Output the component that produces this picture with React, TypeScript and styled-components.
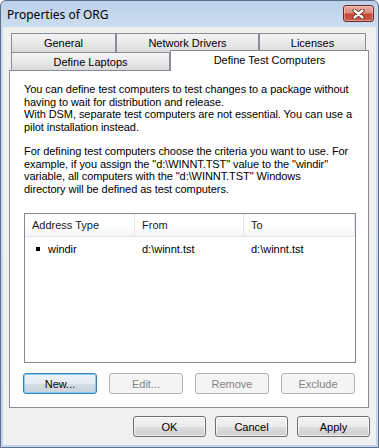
import React from 'react'
import styled, { createGlobalStyle, css } from 'styled-components'

const GlobalStyle = createGlobalStyle`
  html, body {
    margin: 0;
    padding: 0;
    background: #ffffff;
  }
  body {
    font-family: "Liberation Sans", Arial, sans-serif;
    font-size: 11px;
    color: #000000;
  }
`

const Window = styled.div`
  width: 379px;
  height: 448px;
  box-sizing: border-box;
  border: 1px solid #5d6f86;
  border-radius: 6px 6px 0 0;
  background: linear-gradient(#bcd1ea, #cbdcf0 24px, #c4d7ee);
  padding: 0 2px 2px;
  display: flex;
  flex-direction: column;
`

const TitleBar = styled.div`
  height: 26px;
  display: flex;
  align-items: center;
  padding-left: 4px;
`

const Title = styled.span`
  font-family: "Noto Sans", "Open Sans", sans-serif;
  font-size: 12px;
  color: #000000;
`

const CloseButton = styled.div`
  margin-left: auto;
  margin-right: 2px;
  align-self: flex-start;
  margin-top: 4px;
  width: 31px;
  height: 17px;
  box-sizing: border-box;
  border: 1px solid #6b2b2b;
  border-radius: 3px;
  background: linear-gradient(#e9ada0 0%, #dc8c7c 45%, #c34634 55%, #cc5e49 100%);
  box-shadow: inset 0 0 0 1px rgba(255, 220, 210, 0.45);
  display: flex;
  align-items: center;
  justify-content: center;
`

const Client = styled.div`
  flex: 1;
  background: #f0f0f0;
  padding: 6px 7px 0 6px;
  display: flex;
  flex-direction: column;
`

const TabStrip = styled.div`
  display: flex;
  flex-direction: column;
  height: 37px;
  padding-left: 2px;
  position: relative;
  z-index: 1;
`

const TabRow = styled.div<{ $h: number }>`
  display: flex;
  height: ${p => p.$h}px;
  align-items: flex-end;
`

const Tab = styled.div<{ $w: number; $active?: boolean }>`
  width: ${p => p.$w}px;
  height: 100%;
  box-sizing: border-box;
  border: 1px solid #898c95;
  border-bottom: none;
  background: linear-gradient(#f5f5f5, #e6e6e6 60%, #dadada);
  display: flex;
  align-items: center;
  justify-content: center;
  white-space: nowrap;
  ${p => p.$active && css`
    background: #ffffff;
    height: 21px;
    margin-bottom: -1px;
    padding-bottom: 2px;
  `}
`

const Panel = styled.div`
  width: 360px;
  height: 338px;
  box-sizing: border-box;
  border: 1px solid #898c95;
  background: #ffffff;
  padding: 12px 12px 0 14px;
`

const Para = styled.p`
  margin: 0;
  line-height: 12.5px;
  white-space: nowrap;
  letter-spacing: -0.07px;

  & + & {
    margin-top: 12px;
  }
`

const ListBox = styled.div`
  margin-top: 18px;
  width: 332px;
  height: 150px;
  box-sizing: border-box;
  border: 1px solid #828790;
  background: #ffffff;
`

const ListHeader = styled.div`
  display: flex;
  height: 23px;
  box-sizing: border-box;
  background: linear-gradient(#ffffff, #ffffff 50%, #f4f5f7);
  border-bottom: 1px solid #e2e4e8;
`

const HeaderCell = styled.div<{ $w?: number }>`
  ${p => (p.$w ? `width: ${p.$w}px;` : 'flex: 1;')}
  box-sizing: border-box;
  padding-left: 7px;
  display: flex;
  align-items: center;
  color: #1a1a1a;
  border-right: 1px solid #e3e6ea;
`

const ListRow = styled.div`
  display: flex;
  height: 17px;
  margin-top: 3px;
  align-items: center;
`

const Cell = styled.div<{ $w?: number }>`
  ${p => (p.$w ? `width: ${p.$w}px;` : 'flex: 1;')}
  box-sizing: border-box;
  padding-left: 7px;
  display: flex;
  align-items: center;
`

const Bullet = styled.span`
  width: 4px;
  height: 4px;
  background: #000000;
  margin-left: 4px;
  margin-right: 8px;
`

const ButtonRow = styled.div<{ $gap: number }>`
  display: flex;
  gap: ${p => p.$gap}px;
`

const PanelButtons = styled(ButtonRow)`
  margin-top: 10px;
  margin-left: -1px;
`

const Footer = styled(ButtonRow)`
  margin-top: 8px;
  justify-content: flex-end;
  margin-right: -1px;
`

const Button = styled.button<{ $default?: boolean }>`
  width: 74px;
  height: 21px;
  box-sizing: border-box;
  padding: 0;
  font-family: "Liberation Sans", Arial, sans-serif;
  font-size: 11px;
  color: #000000;
  border: 1px solid #707070;
  border-radius: 3px;
  background: linear-gradient(#f2f2f2 0%, #ebebeb 50%, #dddddd 51%, #cfcfcf 100%);
  box-shadow: inset 0 0 0 1px rgba(255, 255, 255, 0.7);

  ${p => p.$default && css`
    border-color: #3c7fb1;
    box-shadow: inset 0 0 0 1px #7fd0f5;
    background: linear-gradient(#eef3f7 0%, #e4ecf2 50%, #d4dde5 51%, #c8d3dc 100%);
  `}

  &:disabled {
    color: #838383;
    border-color: #adb2b5;
    background: #f4f4f4;
    box-shadow: none;
  }
`

const FooterButton = styled(Button)`
  width: 73px;
`

const CloseGlyph = () => (
  <svg width="13" height="10" viewBox="0 0 13 10">
    <path d="M2.5 1.5 L10.5 8.5 M10.5 1.5 L2.5 8.5" stroke="#5a1e1a" strokeWidth="4" strokeLinecap="round" />
    <path d="M2.5 1.5 L10.5 8.5 M10.5 1.5 L2.5 8.5" stroke="#ffffff" strokeWidth="2.4" strokeLinecap="round" />
  </svg>
)

export default function App() {
  return (
    <>
      <GlobalStyle />
      <Window>
        <TitleBar>
          <Title>Properties of ORG</Title>
          <CloseButton>
            <CloseGlyph />
          </CloseButton>
        </TitleBar>
        <Client>
          <TabStrip>
            <TabRow $h={19}>
              <Tab $w={105}>General</Tab>
              <Tab $w={143}>Network Drivers</Tab>
              <Tab $w={107}>Licenses</Tab>
            </TabRow>
            <TabRow $h={18}>
              <Tab $w={159}>Define Laptops</Tab>
              <Tab $w={199} $active>Define Test Computers</Tab>
            </TabRow>
          </TabStrip>
          <Panel>
            <Para>
              You can define test computers to test changes to a package without<br />
              having to wait for distribution and release.<br />
              With DSM, separate test computers are not essential. You can use a<br />
              pilot installation instead.
            </Para>
            <Para>
              For defining test computers choose the criteria you want to use. For<br />
              example, if you assign the "d:\WINNT.TST" value to the "windir"<br />
              variable, all computers with the "d:\WINNT.TST" Windows<br />
              directory will be defined as test computers.
            </Para>
            <ListBox>
              <ListHeader>
                <HeaderCell $w={110}>Address Type</HeaderCell>
                <HeaderCell $w={109}>From</HeaderCell>
                <HeaderCell>To</HeaderCell>
              </ListHeader>
              <ListRow>
                <Cell $w={110}>
                  <Bullet />
                  windir
                </Cell>
                <Cell $w={109}>d:\winnt.tst</Cell>
                <Cell>d:\winnt.tst</Cell>
              </ListRow>
            </ListBox>
            <PanelButtons $gap={12}>
              <Button $default>New...</Button>
              <Button disabled>Edit...</Button>
              <Button disabled>Remove</Button>
              <Button disabled>Exclude</Button>
            </PanelButtons>
          </Panel>
          <Footer $gap={9}>
            <FooterButton>OK</FooterButton>
            <FooterButton>Cancel</FooterButton>
            <FooterButton>Apply</FooterButton>
          </Footer>
        </Client>
      </Window>
    </>
  )
}
